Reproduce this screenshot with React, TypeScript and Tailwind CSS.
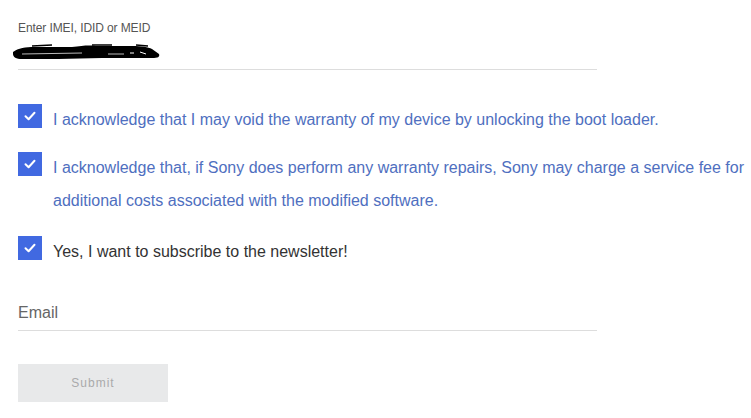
import React from "react";

function Check() {
  return (
    <div className="w-6 h-6 shrink-0 bg-[#4169e1] flex items-center justify-center">
      <svg width="14" height="14" viewBox="0 0 14 14" fill="none">
        <path d="M2.5 7.2 L5.6 10.2 L11.5 3.8" stroke="white" strokeWidth="2" strokeLinecap="round" strokeLinejoin="round" />
      </svg>
    </div>
  );
}

export default function App() {
  return (
    <div className="w-[751px] h-[418px] bg-white pl-[18px] pt-[20px] font-['Liberation_Sans',Arial,sans-serif] overflow-hidden">
      <div className="w-[579px]">
        <div className="text-[12px] leading-[16px] text-[#555] tracking-[-0.1px]">Enter IMEI, IDID or MEID</div>
        <div className="h-[34px] border-b border-[#dddddd] relative">
          <svg className="absolute left-[-6px] top-[8px]" width="150" height="16" viewBox="0 0 150 16">
            <path d="M1 8 C 6 4, 14 3, 22 3 L 60 3 C 70 2, 76 1, 84 2 L 120 2 C 130 2, 136 3, 140 5 L 147 10 C 148 13, 146 14, 140 14 L 90 14 C 60 15, 30 15, 10 15 C 4 15, 1 13, 1 10 Z" fill="black" />
            <path d="M20 2 L 40 1 M 80 1 L 100 1 M 124 1 L 136 2" stroke="black" strokeWidth="1.5" fill="none" />
            <path d="M10 10 L 70 9 M 96 10 L 112 10" stroke="#bbb" strokeWidth="1" fill="none" />
            <path d="M118 9 L 122 9 M 128 8 L 134 10" stroke="#fff" strokeWidth="1" fill="none" />
          </svg>
        </div>
      </div>

      <div className="mt-[34px] flex items-start gap-[11px]">
        <Check />
        <div className="text-[16px] leading-[33px] text-[#4f6fc0] -mt-[1px]">
          I acknowledge that I may void the warranty of my device by unlocking the boot loader.
        </div>
      </div>

      <div className="mt-[16px] flex items-start gap-[11px]">
        <Check />
        <div className="text-[16px] leading-[33px] text-[#4f6fc0] -mt-[1px]">
          I acknowledge that, if Sony does perform any warranty repairs, Sony may charge a service fee for additional costs associated with the modified software.
        </div>
      </div>

      <div className="mt-[19px] flex items-start gap-[11px]">
        <Check />
        <div className="text-[16px] leading-[33px] text-[#333] -mt-[1px]">
          Yes, I want to subscribe to the newsletter!
        </div>
      </div>

      <div className="w-[579px] mt-[35px] border-b border-[#dddddd] h-[28px] text-[16px] leading-[20px] text-[#666]">
        Email
      </div>

      <div className="mt-[33px] w-[150px] h-[38px] bg-[#e8e9ea] flex items-center justify-center text-[12px] tracking-[1px] text-[#aaa]">
        Submit
      </div>
    </div>
  );
}
